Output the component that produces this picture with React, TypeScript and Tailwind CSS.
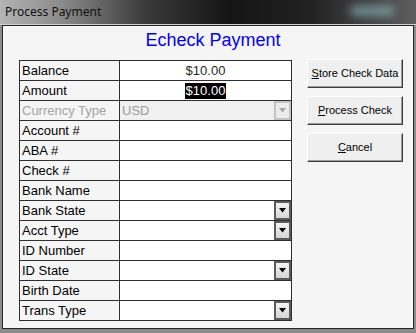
import React from 'react';

type Row = { label: string; value?: string; mode?: 'text' | 'selected' | 'disabled'; drop?: boolean };

const rows: Row[] = [
  { label: 'Balance', value: '$10.00', mode: 'text' },
  { label: 'Amount', value: '$10.00', mode: 'selected' },
  { label: 'Currency Type', value: 'USD', mode: 'disabled', drop: true },
  { label: 'Account #' },
  { label: 'ABA #' },
  { label: 'Check #' },
  { label: 'Bank Name' },
  { label: 'Bank State', drop: true },
  { label: 'Acct Type', drop: true },
  { label: 'ID Number' },
  { label: 'ID State', drop: true },
  { label: 'Birth Date' },
  { label: 'Trans Type', drop: true },
];

const DropButton: React.FC<{ disabled?: boolean }> = ({ disabled }) => (
  <div
    className={`absolute right-0 top-0 h-[19px] w-[17px] flex items-center justify-center border-2 ${
      disabled ? 'border-[#c4c4c4] bg-[#ececec]' : 'border-[#5c5c5c] bg-[linear-gradient(#f4f4f4,#d6d6d6)]'
    }`}
  >
    <svg width="7" height="5" viewBox="0 0 7 5">
      <polygon points="0,0 7,0 3.5,4.5" fill={disabled ? '#a8a8a8' : '#000'} />
    </svg>
  </div>
);

const WinButton: React.FC<{ first: string; rest: string }> = ({ first, rest }) => (
  <button className="h-[29px] w-[96px] bg-[#efefef] border border-t-white border-l-white border-r-[#3c3c3c] border-b-[#3c3c3c] shadow-[inset_-1px_-1px_0_#9c9c9c] text-[11px] text-black leading-none">
    <span className="underline">{first}</span>
    {rest}
  </button>
);

export default function App() {
  return (
    <div className="w-[416px] h-[333px] flex flex-col bg-[#7a7a7a] font-['Liberation_Sans',Arial,sans-serif] overflow-hidden">
      <div className="relative h-[24px] shrink-0 bg-[linear-gradient(to_right,#b4b4b4_0%,#8a8a8a_15%,#3a3a3a_35%,#151515_55%,#222_75%,#5e5e5e_100%)]">
        <div className="absolute left-[350px] top-[6px] h-[10px] w-[45px] rounded-full bg-[#8fc2c6] opacity-60 blur-[4px]" />
        <span className="absolute left-[5px] top-[4px] text-[12px] leading-[16px] text-[#111] font-['Noto_Sans',sans-serif]">
          Process Payment
        </span>
      </div>
      <div className="flex-1 px-[2px] pb-[4px] border-t border-[#cfcfcf] bg-[#8c8c8c]">
        <div className="h-full border border-[#262626] bg-[#f5f5f5] pl-[16px]">
          <div className="h-[33px] pt-[3px] text-center text-[18px] leading-[22px] text-[#0000ff] pr-[6px]">
            Echeck Payment
          </div>
          <div className="flex items-start">
            <div className="mt-[1px] w-[273px] border-l border-t border-[#2e2e2e]">
              {rows.map((r) => (
                <div key={r.label} className="flex h-[20px]">
                  <div
                    className={`w-[100px] border-r border-b border-[#2e2e2e] pl-[2px] text-[13px] leading-[19px] ${
                      r.mode === 'disabled' ? 'text-[#a4a4a4]' : 'text-black'
                    }`}
                  >
                    {r.label}
                  </div>
                  <div
                    className={`relative w-[172px] border-r border-b border-[#2e2e2e] text-[13px] leading-[19px] ${
                      r.mode === 'disabled' ? 'bg-[#f0f0f0] text-[#9a9a9a] pl-[2px]' : 'bg-white text-center'
                    }`}
                  >
                    {r.mode === 'text' && <span className="text-[#1d2a1d]">{r.value}</span>}
                    {r.mode === 'selected' && (
                      <span className="inline-block bg-black text-white leading-[16px] px-[1px] mt-[1px]">{r.value}</span>
                    )}
                    {r.mode === 'disabled' && r.value}
                    {r.drop && <DropButton disabled={r.mode === 'disabled'} />}
                  </div>
                </div>
              ))}
            </div>
            <div className="ml-[15px] flex flex-col gap-[8px]">
              <WinButton first="S" rest="tore Check Data" />
              <WinButton first="P" rest="rocess Check" />
              <WinButton first="C" rest="ancel" />
            </div>
          </div>
        </div>
      </div>
    </div>
  );
}
